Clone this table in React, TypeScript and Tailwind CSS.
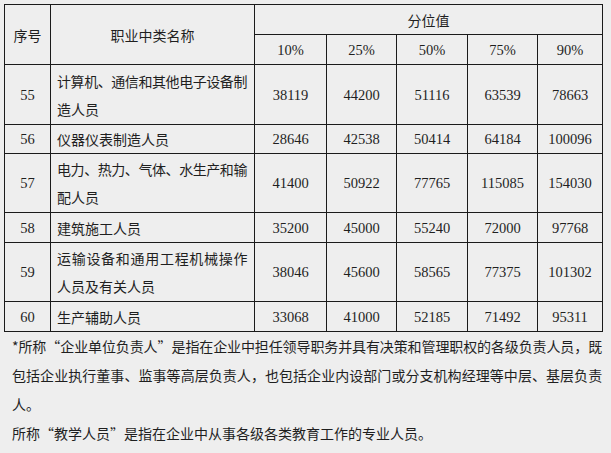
import React from "react";

const rows: { no: string; name: string[]; v: string[]; h: string }[] = [
  { no: "55", name: ["计算机、通信和其他电子设备制", "造人员"], v: ["38119", "44200", "51116", "63539", "78663"], h: "h-[60px]" },
  { no: "56", name: ["仪器仪表制造人员"], v: ["28646", "42538", "50414", "64184", "100096"], h: "h-[29px]" },
  { no: "57", name: ["电力、热力、气体、水生产和输", "配人员"], v: ["41400", "50922", "77765", "115085", "154030"], h: "h-[59px]" },
  { no: "58", name: ["建筑施工人员"], v: ["35200", "45000", "55240", "72000", "97768"], h: "h-[30px]" },
  { no: "59", name: ["运输设备和通用工程机械操作", "人员及有关人员"], v: ["38046", "45600", "58565", "77375", "101302"], h: "h-[59px]" },
  { no: "60", name: ["生产辅助人员"], v: ["33068", "41000", "52185", "71492", "95311"], h: "h-[30px]" },
];

const cjk = "font-['Noto_Sans_CJK_SC',sans-serif]";
const serif = "font-['Liberation_Serif','Noto_Sans_CJK_SC',serif]";
const cell = "border border-[#1a1a1a] p-0";

function LQ() {
  return <span className="inline-block w-[14px] text-right">“</span>;
}
function RQ() {
  return <span className="inline-block w-[14px] text-left">”</span>;
}

export default function App() {
  return (
    <div className="w-[611px] h-[453px] bg-[#eeeeee] text-[#1f1f1f] overflow-hidden pt-[4px]">
      <table className="ml-[4px] w-[598px] table-fixed border-collapse text-[14px] leading-[28px]">
        <colgroup>
          <col className="w-[46px]" />
          <col className="w-[204px]" />
          <col className="w-[72px]" />
          <col className="w-[70px]" />
          <col className="w-[71px]" />
          <col className="w-[70px]" />
          <col className="w-[65px]" />
        </colgroup>
        <thead>
          <tr className="h-[30px]">
            <th rowSpan={2} className={`${cell} ${cjk} font-normal text-center`}>序号</th>
            <th rowSpan={2} className={`${cell} ${cjk} font-normal text-center`}>职业中类名称</th>
            <th colSpan={5} className={`${cell} ${cjk} font-normal text-center`}>分位值</th>
          </tr>
          <tr className="h-[30px]">
            {["10%", "25%", "50%", "75%", "90%"].map((p) => (
              <th key={p} className={`${cell} ${serif} font-normal text-center text-[14.5px]`}>{p}</th>
            ))}
          </tr>
        </thead>
        <tbody>
          {rows.map((r) => (
            <tr key={r.no} className={r.h}>
              <td className={`${cell} ${serif} text-center text-[14.5px]`}>{r.no}</td>
              <td className={`${cell} ${cjk} pl-[6px] pr-0 align-middle`}>
                {r.name.length > 1 ? (
                  <>
                    <div className="w-[190px] whitespace-nowrap tracking-[-0.45px] text-justify [text-align-last:justify]">{r.name[0]}</div>
                    <div className="whitespace-nowrap">{r.name[1]}</div>
                  </>
                ) : (
                  <div className="whitespace-nowrap">{r.name[0]}</div>
                )}
              </td>
              {r.v.map((x, i) => (
                <td key={i} className={`${cell} ${serif} text-center text-[14.5px]`}>{x}</td>
              ))}
            </tr>
          ))}
        </tbody>
      </table>
      <div className={`${cjk} text-[14px] leading-[29px] pl-[12px]`}>
        <div className="w-[590px] whitespace-nowrap tracking-[-0.15px] text-justify [text-align-last:justify]">
          *所称<LQ />企业单位负责人<RQ />是指在企业中担任领导职务并具有决策和管理职权的各级负责人员，既
        </div>
        <div className="w-[590px] whitespace-nowrap tracking-[-0.15px] text-justify [text-align-last:justify]">
          包括企业执行董事、监事等高层负责人，也包括企业内设部门或分支机构经理等中层、基层负责
        </div>
        <div>人。</div>
        <div className="whitespace-nowrap">
          所称<LQ />教学人员<RQ />是指在企业中从事各级各类教育工作的专业人员。
        </div>
      </div>
    </div>
  );
}
